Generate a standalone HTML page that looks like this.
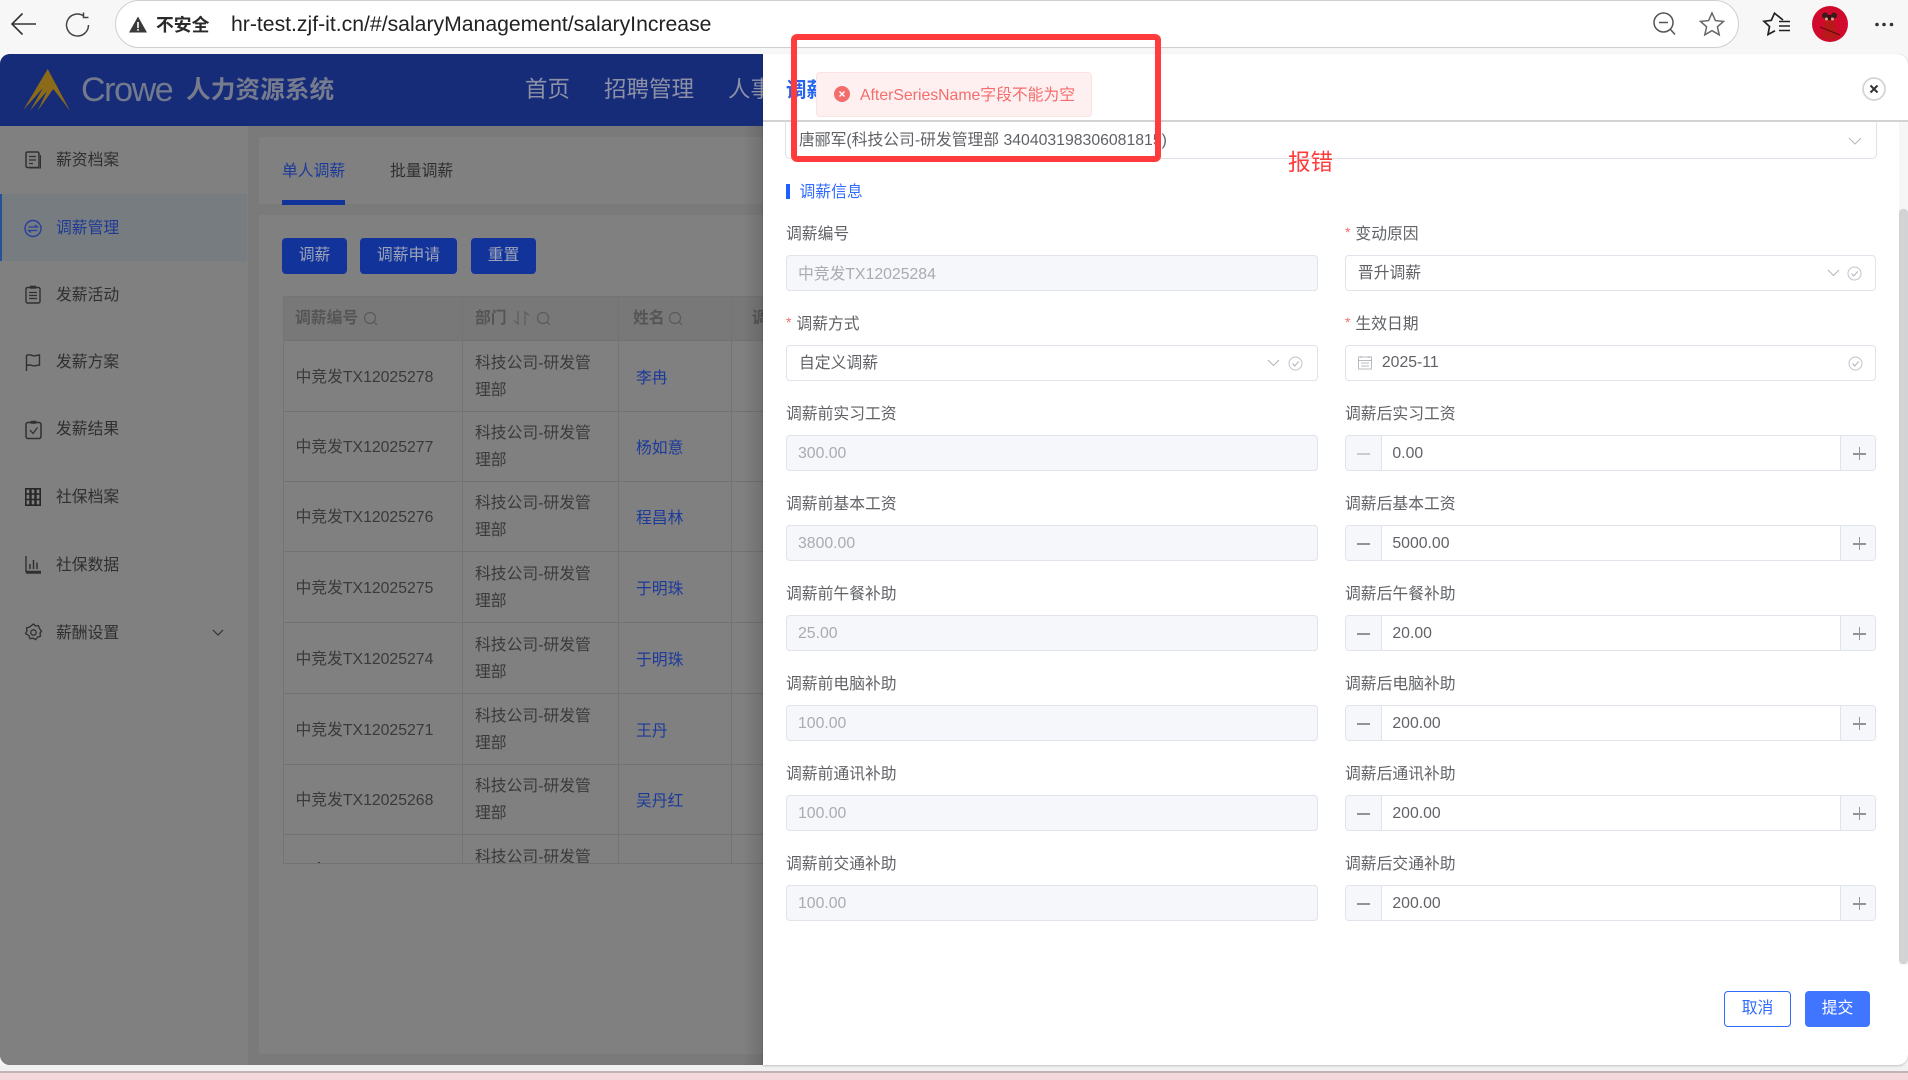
<!DOCTYPE html>
<html lang="zh-CN"><head><meta charset="utf-8"><title>调薪管理</title>
<style>
*{box-sizing:border-box}
html,body{margin:0;padding:0}
body{width:1908px;height:1080px;position:relative;overflow:hidden;background:#f7f7f7;font-family:"Liberation Sans","Noto Sans CJK SC",sans-serif;font-size:15.8px;color:#606266}
.a{position:absolute}
.t{position:absolute;white-space:nowrap;line-height:20px}
svg{position:absolute;overflow:visible;fill:none}
.side{color:#2f2f2f;left:56px}
.row{position:absolute;left:0;width:1908px;height:70px}
.in{position:absolute;top:32.3px;height:35.4px;border:1px solid #e0e3ea;border-radius:4px;background:#fff}
.in.l{left:786px;width:531.6px}
.in.r{left:1345.4px;width:530.6px}
.dis{background:#f5f7fa;color:#a8abb2}
.in .t{top:8px;left:11px}
.lab{top:2.4px}
.lab.l{left:786px}.lab.r{left:1345px}
.sl{left:796.4px;top:2.4px}.sr{left:1355.4px;top:2.4px}
.st{color:#f56c6c;font-size:14px;top:-1px}
.m,.p{position:absolute;top:0;bottom:0;background:#f5f7fa}
.m{left:0;width:36px;border-right:1px solid #e0e3ea;border-radius:3px 0 0 3px}
.p{right:0;width:35px;border-left:1px solid #e0e3ea;border-radius:0 3px 3px 0}
.m:after,.p:after{content:"";position:absolute;left:11px;top:17px;width:13px;height:1.3px;background:#909399}
.p:after{left:12px}
.p:before{content:"";position:absolute;left:18px;top:11px;width:1.3px;height:13px;background:#909399}
.m.off:after{background:#c8cbd1}
.num .t{left:46px;color:#606266}
.tr{position:absolute;left:0;width:480px;border-bottom:1px solid #727276;height:71px}
.c1,.c2a,.c2b,.c3{position:absolute;white-space:nowrap;line-height:20px}
.c1{left:11.5px;top:26.500px;color:#3a3a3a}
.c2a{left:191px;top:12.500px;color:#3a3a3a}
.c2b{left:191px;top:40px;color:#3a3a3a}
.c3{left:352px;top:27.500px;color:#1c3a9a}
.th{position:absolute;top:13px;white-space:nowrap;line-height:20px;color:#555;font-weight:700}
.vl{position:absolute;top:0;bottom:0;width:1px;background:#747478}
.btn{position:absolute;top:238px;height:36px;background:#12349a;border-radius:4px;color:#9da3b8;line-height:35px;text-align:center}
</style></head><body>

<!-- browser toolbar -->
<div class="a" style="left:0;top:0;width:1908px;height:54px;background:#f7f7f7"></div>
<div class="a" style="left:115px;top:0;width:1624px;height:47.5px;background:#fff;border:1.5px solid #cfcfcf;border-radius:24px"></div>
<svg style="left:0;top:0" width="120" height="54"><path d="M36 24H13M22.5 13.5L12 24l10.5 10.5" stroke="#333" stroke-width="1.6"/><path d="M88.5 25a11 11 0 1 1-5-9.2M83.500 12.500v5h5" stroke="#444" stroke-width="1.5"/></svg>
<svg style="left:129px;top:16px" width="18" height="17"><path d="M9 0.500L18 16.500H0Z" fill="#3a3a3a"/><rect x="8.200" y="6" width="1.600" height="6" fill="#fff"/><rect x="8.200" y="13" width="1.600" height="1.700" fill="#fff"/></svg>
<div class="t" style="left:156px;top:14.500px;font-size:17.800px;font-weight:700;color:#2a2a2a">不安全</div>
<div class="t" style="left:231px;top:14.500px;font-size:21.200px;color:#222">hr-test.zjf-it.cn/#/salaryManagement/salaryIncrease</div>
<svg style="left:1650px;top:10px" width="30" height="28"><circle cx="13.500" cy="12.500" r="9.500" stroke="#555" stroke-width="1.500"/><path d="M9 12.500h9M20.500 19.500l4.500 5" stroke="#555" stroke-width="1.500"/></svg>
<svg style="left:1698px;top:11px" width="28" height="26"><path d="M14 2l3.400 7.600 8.100.8-6.100 5.400 1.800 8L14 19.600 6.800 23.800l1.800-8-6.100-5.400 8.100-.8Z" stroke="#666" stroke-width="1.500"/></svg>
<svg style="left:1762px;top:11px" width="30" height="26"><path d="M21 9L12.500 2.200 9.300 9.300 2 10.300l5.500 5.200L6 23.500l7-3.700" stroke="#222" stroke-width="1.700"/><path d="M17 10.500h11M17 15h11M17 19.500h11" stroke="#222" stroke-width="1.600"/></svg>
<svg style="left:1812px;top:6px" width="36" height="36"><circle cx="18" cy="18" r="18" fill="#cf0a2c"/><path d="M10 33l3-19h9l4 19Z" fill="#b81a1a"/><circle cx="13" cy="9.500" r="3" fill="#3a1a1a"/><circle cx="22" cy="9.500" r="3" fill="#3a1a1a"/><rect x="15.500" y="9" width="3.500" height="5" fill="#2e1414"/><circle cx="14.500" cy="13" r="1.500" fill="#d9a48c"/><circle cx="20.500" cy="13" r="1.500" fill="#d9a48c"/><path d="M8 21l20 8" stroke="#5a0a0a" stroke-width="1"/></svg>
<svg style="left:1874px;top:22px" width="22" height="6"><circle cx="3" cy="2.500" r="1.800" fill="#333"/><circle cx="10" cy="2.500" r="1.800" fill="#333"/><circle cx="17.500" cy="2.500" r="1.800" fill="#333"/></svg>

<!-- bottom strip -->
<div class="a" style="left:0;top:1065px;width:1908px;height:6px;background:#f1f1f1"></div>
<div class="a" style="left:0;top:1071px;width:1908px;height:2px;background:#c2b3b3"></div>
<div class="a" style="left:0;top:1073px;width:1908px;height:7px;background:#f4d7da"></div>

<!-- page -->
<div class="a" style="left:0;top:54px;width:1908px;height:1011px;border-radius:10px;overflow:hidden;background:#7f7f7f">
<div class="a" style="left:0;top:0;width:763px;height:72px;background:#172c78"></div>
<div class="a" style="left:248px;top:72px;width:515px;height:939px;background:#7a7a7a"></div>
<div class="a" style="left:0;top:72px;width:248px;height:939px;background:#808080"></div>
<div class="a" style="left:259px;top:83px;width:504px;height:67px;background:#808080"></div>
<div class="a" style="left:259px;top:161px;width:504px;height:839px;background:#808080"></div>
<div class="a" style="left:0;top:140px;width:247px;height:67px;background:#767c80"></div>
<div class="a" style="left:0;top:140px;width:2px;height:67px;background:#25519a"></div>
</div>

<!-- logo / nav -->
<svg style="left:0;top:0" width="80" height="120"><path d="M47.700 69L70 110.700 53.300 89 37.700 110.700 47 91 30 110.700 43 88 23.300 110Z" fill="#8b6a18"/></svg>
<div class="t" style="left:81px;top:70px;font-size:34px;line-height:40px;color:#737a8e;letter-spacing:-1.400px">Crowe</div>
<div class="t" style="left:186px;top:76.400px;font-size:24.700px;line-height:30px;font-weight:700;color:#767b8e">人力资源系统</div>
<div class="t" style="left:525px;top:75.500px;font-size:22.500px;line-height:28px;color:#8c91a6">首页</div>
<div class="t" style="left:604px;top:75.500px;font-size:22.500px;line-height:28px;color:#8c91a6">招聘管理</div>
<div class="t" style="left:728px;top:75.500px;font-size:22.500px;line-height:28px;color:#8c91a6">人事</div>

<!-- sidebar -->
<div class="t side" style="top:151.200px">薪资档案</div>
<div class="t side" style="top:219.200px;color:#1f3a96">调薪管理</div>
<div class="t side" style="top:285.700px">发薪活动</div>
<div class="t side" style="top:353.200px">发薪方案</div>
<div class="t side" style="top:420.200px">发薪结果</div>
<div class="t side" style="top:488.200px">社保档案</div>
<div class="t side" style="top:556.200px">社保数据</div>
<div class="t side" style="top:623.700px">薪酬设置</div>
<svg style="left:25px;top:151px" width="16" height="18"><rect x="1" y="1" width="13" height="15.500" rx="1.500" stroke="#303030" stroke-width="1.500"/><path d="M4 5.500h7M4 9h7M4 12.500h4" stroke="#303030" stroke-width="1.200"/><path d="M15.500 4v13H4" stroke="#303030" stroke-width="1"/></svg>
<svg style="left:24px;top:218.500px" width="18" height="19"><circle cx="9" cy="9.500" r="8" stroke="#2540a0" stroke-width="1.400"/><path d="M4.500 8h9l-2.500-2M13.500 11.500h-9l2.500 2" stroke="#2540a0" stroke-width="1.200"/></svg>
<svg style="left:25px;top:285px" width="16" height="19"><rect x="1" y="2.500" width="14" height="15.500" rx="1.500" stroke="#303030" stroke-width="1.400"/><rect x="5" y="0.700" width="6" height="3" fill="#303030"/><path d="M4 7.500h8M4 10.500h8M4 13.500h8" stroke="#303030" stroke-width="1.200"/></svg>
<svg style="left:25px;top:353px" width="16" height="19"><path d="M1.500 18V2.500c4-2 5 .8 8 .3 2-.3 3.500-.8 5-.8v10c-2 0-3 .7-5 .8-3 .2-4-1.800-8-.3" stroke="#303030" stroke-width="1.400"/></svg>
<svg style="left:24.500px;top:420px" width="17" height="20"><rect x="1" y="2.500" width="15" height="16" rx="2" stroke="#303030" stroke-width="1.500"/><rect x="5.500" y="0.700" width="6" height="3" rx="1" fill="#303030"/><path d="M5 10l3 3.500 4.500-6" stroke="#303030" stroke-width="1.300"/></svg>
<svg style="left:25px;top:488px" width="16" height="18"><rect x="0.800" y="0.800" width="14.400" height="16.400" stroke="#262626" stroke-width="1.600"/><path d="M5.500 1v16M10.500 1v16" stroke="#262626" stroke-width="2.400"/><path d="M1 6h14M1 11.500h14" stroke="#262626" stroke-width="1.400"/></svg>
<svg style="left:25px;top:556px" width="16" height="18"><path d="M1 0v15.500h15M1 17h15" stroke="#303030" stroke-width="1.400"/><path d="M5 13V8M8.500 13V4M12 13V6.500" stroke="#303030" stroke-width="1.500"/></svg>
<svg style="left:24.500px;top:623px" width="17" height="19"><path d="M8.500 1l2 2 3-.3 1 3 2 2.500-1.500 2 .5 3-3 1-2 2.500-2.500-1.500-3 .5-1-3L.5 10.500 2 8 1.500 5l3-1Z" stroke="#303030" stroke-width="1.300"/><circle cx="8.500" cy="9.500" r="2.700" stroke="#303030" stroke-width="1.300"/></svg>
<svg style="left:212px;top:629px" width="12" height="8"><path d="M1 1l5 5 5-5" stroke="#333" stroke-width="1.200"/></svg>

<!-- tabs + buttons -->
<div class="t" style="left:282px;top:162px;color:#1c3a9a">单人调薪</div>
<div class="t" style="left:390px;top:162px;color:#2f2f2f">批量调薪</div>
<div class="a" style="left:282px;top:200px;width:63px;height:5px;background:#12349a"></div>
<div class="btn" style="left:282px;width:65px">调薪</div>
<div class="btn" style="left:360px;width:97px">调薪申请</div>
<div class="btn" style="left:471px;width:65px">重置</div>

<!-- table -->
<div class="a" style="left:283px;top:296px;width:480px;height:568px;overflow:hidden;border-left:1px solid #747478;border-bottom:1px solid #727276">
<div class="a" style="left:0;top:0;width:480px;height:45px;background:#787878;border-bottom:1px solid #727276;border-top:1px solid #747478"></div>
<div class="th" style="left:11px;color:#555">调薪编号</div>
<svg style="left:79px;top:15px" width="16" height="16"><circle cx="7" cy="7" r="5.500" stroke="#5a5a5a" stroke-width="1.200"/><path d="M11 11l3 3" stroke="#5a5a5a" stroke-width="1.200"/></svg>
<div class="th" style="left:191px">部门</div>
<svg style="left:229px;top:14px" width="17" height="17"><path d="M5 1v13L1 10.500M12 15V2l4 3.500" stroke="#5a5a5a" stroke-width="1.100"/></svg>
<svg style="left:252px;top:15px" width="16" height="16"><circle cx="7" cy="7" r="5.500" stroke="#5a5a5a" stroke-width="1.200"/><path d="M11 11l3 3" stroke="#5a5a5a" stroke-width="1.200"/></svg>
<div class="th" style="left:349px">姓名</div>
<svg style="left:384px;top:15px" width="16" height="16"><circle cx="7" cy="7" r="5.500" stroke="#5a5a5a" stroke-width="1.200"/><path d="M11 11l3 3" stroke="#5a5a5a" stroke-width="1.200"/></svg>
<div class="th" style="left:468px">调薪</div>

<div class="tr" style="top:45px"><div class="c1">中竞发TX12025278</div><div class="c2a">科技公司-研发管</div><div class="c2b">理部</div><div class="c3">李冉</div></div>
<div class="tr" style="top:115px"><div class="c1">中竞发TX12025277</div><div class="c2a">科技公司-研发管</div><div class="c2b">理部</div><div class="c3">杨如意</div></div>
<div class="tr" style="top:185px"><div class="c1">中竞发TX12025276</div><div class="c2a">科技公司-研发管</div><div class="c2b">理部</div><div class="c3">程昌林</div></div>
<div class="tr" style="top:256px"><div class="c1">中竞发TX12025275</div><div class="c2a">科技公司-研发管</div><div class="c2b">理部</div><div class="c3">于明珠</div></div>
<div class="tr" style="top:327px"><div class="c1">中竞发TX12025274</div><div class="c2a">科技公司-研发管</div><div class="c2b">理部</div><div class="c3">于明珠</div></div>
<div class="tr" style="top:398px"><div class="c1">中竞发TX12025271</div><div class="c2a">科技公司-研发管</div><div class="c2b">理部</div><div class="c3">王丹</div></div>
<div class="tr" style="top:468px"><div class="c1">中竞发TX12025268</div><div class="c2a">科技公司-研发管</div><div class="c2b">理部</div><div class="c3">吴丹红</div></div>
<div class="tr" style="top:539px"><div class="c2a">科技公司-研发管</div><div class="c2b">理部</div></div>
<div class="a" style="left:34px;top:566px;width:2px;height:2px;background:#3a3a3a"></div>
<div class="vl" style="left:178px"></div><div class="vl" style="left:334px"></div><div class="vl" style="left:447px"></div>
</div>

<div class="a" style="left:743px;top:126px;width:20px;height:939px;background:linear-gradient(90deg,rgba(0,0,0,0),rgba(0,0,0,.13))"></div>

<!-- drawer -->
<div class="a" style="left:763px;top:54px;width:1145px;height:1011px;background:#fff;border-radius:0 10px 10px 0;box-shadow:0 1px 2px rgba(0,0,0,.2)"></div>
<div class="t" style="left:786px;top:78px;font-size:20.500px;line-height:26px;font-weight:700;color:#2563f0">调薪</div>
<div class="a" style="left:763px;top:120px;width:1145px;height:1.500px;background:#d2d2d2"></div>
<svg style="left:1861px;top:77px" width="26" height="24"><circle cx="13" cy="12" r="11" fill="#fff" stroke="#d4d4d4" stroke-width="1.800"/><path d="M9.500 8.500l7 7M16.500 8.500l-7 7" stroke="#333" stroke-width="2"/></svg>
<div class="a" style="left:1899px;top:122px;width:9px;height:843px;background:#f6f6f6"></div>
<div class="a" style="left:1899px;top:209px;width:9px;height:755px;background:#d1d3d5;border-radius:4px"></div>

<div class="a" style="left:785px;top:121px;width:1092px;height:38px;border:1px solid #dfe2e8;border-top:0;border-radius:0 0 5px 5px"></div>
<div class="t" style="left:799px;top:130.500px">唐郦军(科技公司-研发管理部 340403198306081815)</div>
<svg style="left:1848px;top:137px" width="14" height="8"><path d="M1 1l6 6 6-6" stroke="#b5b8be" stroke-width="1.100"/></svg>
<div class="a" style="left:786px;top:184px;width:4px;height:15px;background:#1f5fff"></div>
<div class="t" style="left:799.500px;top:183px;color:#2f6bff">调薪信息</div>

<div class="row" style="top:223px">
<div class="t lab l">调薪编号</div><div class="in l dis"><div class="t" style="top:9px">中竞发TX12025284</div></div>
<div class="t st" style="left:1345px">*</div><div class="t sr">变动原因</div>
<div class="in r"><div class="t" style="left:11.500px">晋升调薪</div>
<svg style="left:481px;top:13px" width="13" height="8"><path d="M1 1l5.500 5.500L12 1" stroke="#b5b8be" stroke-width="1.100"/></svg>
<svg style="left:501px;top:10px" width="15" height="15"><circle cx="7.500" cy="7.500" r="6.500" stroke="#c0c4cc" stroke-width="1"/><path d="M4.500 7.500l2.200 2.500 4-4.500" stroke="#b0b4bc" stroke-width="1"/></svg></div>
</div>

<div class="row" style="top:313px">
<div class="t st" style="left:786px">*</div><div class="t sl">调薪方式</div>
<div class="in l"><div class="t" style="left:12px">自定义调薪</div>
<svg style="left:480px;top:13px" width="13" height="8"><path d="M1 1l5.500 5.500L12 1" stroke="#b5b8be" stroke-width="1.100"/></svg>
<svg style="left:501px;top:10px" width="15" height="15"><circle cx="7.500" cy="7.500" r="6.500" stroke="#c0c4cc" stroke-width="1"/><path d="M4.500 7.500l2.200 2.500 4-4.500" stroke="#b0b4bc" stroke-width="1"/></svg></div>
<div class="t st" style="left:1345px">*</div><div class="t sr">生效日期</div>
<div class="in r"><div class="t" style="left:35.500px;top:7px">2025-11</div>
<svg style="left:12px;top:9px" width="15" height="15"><rect x="0.500" y="2" width="13" height="12" stroke="#b8bbc2"/><path d="M0 5.500h14M3 1v2M11 1v2M3 8h8M3 11h8" stroke="#b8bbc2"/></svg>
<svg style="left:502px;top:10px" width="15" height="15"><circle cx="7.500" cy="7.500" r="6.500" stroke="#c0c4cc" stroke-width="1"/><path d="M4.500 7.500l2.200 2.500 4-4.500" stroke="#b0b4bc" stroke-width="1"/></svg></div>
</div>

<div class="row" style="top:403px"><div class="t lab l">调薪前实习工资</div><div class="in l dis"><div class="t">300.00</div></div><div class="t lab r">调薪后实习工资</div><div class="in r num"><div class="m off"></div><div class="t">0.00</div><div class="p"></div></div></div>
<div class="row" style="top:493px"><div class="t lab l">调薪前基本工资</div><div class="in l dis"><div class="t">3800.00</div></div><div class="t lab r">调薪后基本工资</div><div class="in r num"><div class="m"></div><div class="t">5000.00</div><div class="p"></div></div></div>
<div class="row" style="top:583px"><div class="t lab l">调薪前午餐补助</div><div class="in l dis"><div class="t">25.00</div></div><div class="t lab r">调薪后午餐补助</div><div class="in r num"><div class="m"></div><div class="t">20.00</div><div class="p"></div></div></div>
<div class="row" style="top:673px"><div class="t lab l">调薪前电脑补助</div><div class="in l dis"><div class="t">100.00</div></div><div class="t lab r">调薪后电脑补助</div><div class="in r num"><div class="m"></div><div class="t">200.00</div><div class="p"></div></div></div>
<div class="row" style="top:763px"><div class="t lab l">调薪前通讯补助</div><div class="in l dis"><div class="t">100.00</div></div><div class="t lab r">调薪后通讯补助</div><div class="in r num"><div class="m"></div><div class="t">200.00</div><div class="p"></div></div></div>
<div class="row" style="top:853px"><div class="t lab l">调薪前交通补助</div><div class="in l dis"><div class="t">100.00</div></div><div class="t lab r">调薪后交通补助</div><div class="in r num"><div class="m"></div><div class="t">200.00</div><div class="p"></div></div></div>

<div class="a" style="left:1724px;top:991px;width:67px;height:36px;border:1px solid #2f6bff;border-radius:4px;color:#2f6bff;text-align:center;line-height:34.500px">取消</div>
<div class="a" style="left:1805px;top:991px;width:65px;height:36px;background:#3f75ff;border-radius:4px;color:#fff;text-align:center;line-height:36px">提交</div>

<!-- message -->
<div class="a" style="left:815.500px;top:72px;width:276.500px;height:45px;background:#fef0f0;border:1px solid #fde2e2;border-radius:4px"></div>
<svg style="left:834px;top:86px" width="16" height="16"><circle cx="8" cy="8" r="8" fill="#f56c6c"/><path d="M5.500 5.500l5 5M10.500 5.500l-5 5" stroke="#fff" stroke-width="1.400"/></svg>
<div class="t" style="left:860px;top:85.500px;color:#f56c6c">AfterSeriesName字段不能为空</div>

<!-- annotation -->
<div class="a" style="left:790.500px;top:34px;width:370.500px;height:128px;border:6px solid #ff3b3b;border-radius:6px"></div>
<div class="t" style="left:1288px;top:147.500px;font-size:22.500px;line-height:30px;color:#ff3b3b">报错</div>

</body></html>
